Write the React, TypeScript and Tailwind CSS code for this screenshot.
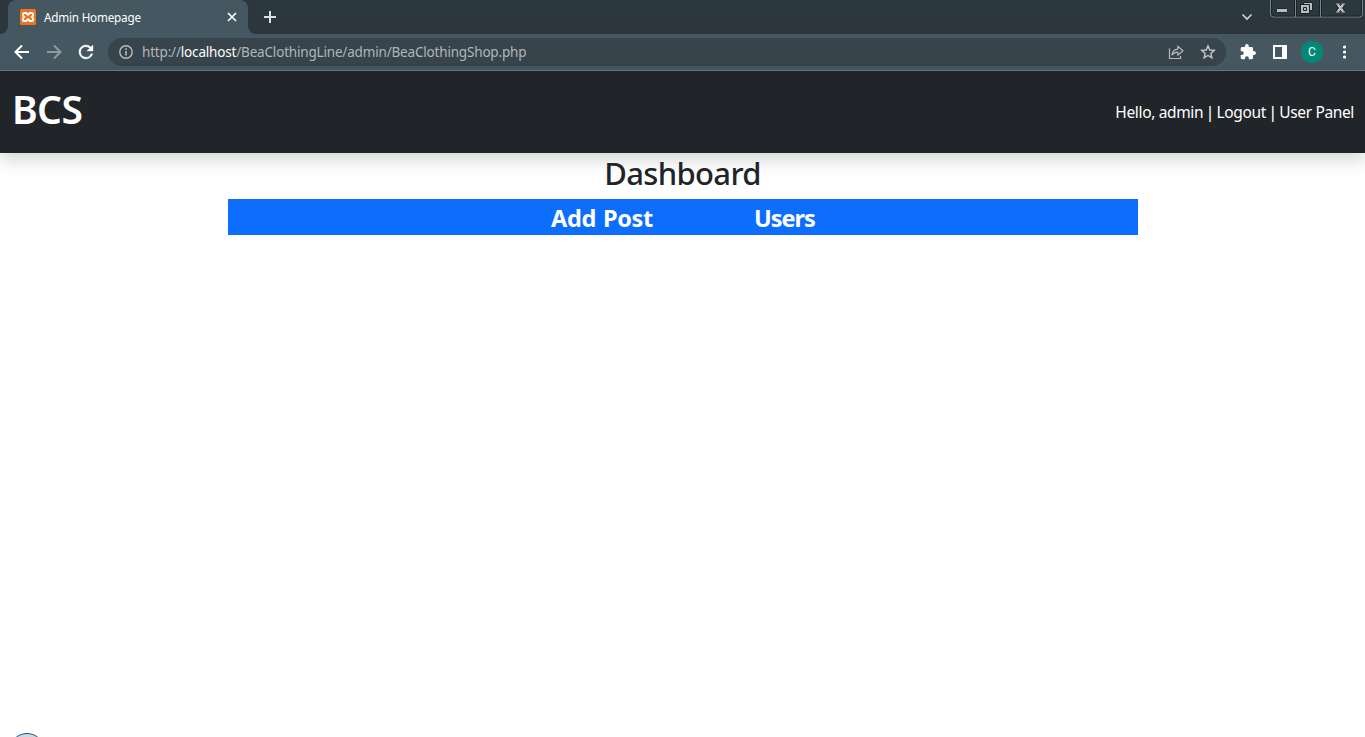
import React from "react";

function XamppIcon() {
  return (
    <svg width="16" height="16" viewBox="0 0 16 16" className="ml-3 shrink-0">
      <rect width="16" height="16" rx="1.5" fill="#ed7423" />
      <path
        d="M4.600 3.900h1.500L8 5.700l1.900-1.800h1.500c1.100 0 1.600.6 1.600 1.600v.8c0 .7-.5 1.200-1.300 1.700.8.5 1.300 1 1.300 1.700v.8c0 1-.5 1.600-1.600 1.600H9.900L8 10.300l-1.900 1.800H4.600C3.500 12.100 3 11.500 3 10.500v-.8c0-.7.5-1.200 1.300-1.700C3.500 7.500 3 7 3 6.300v-.8c0-1 .5-1.600 1.600-1.600Z"
        fill="none"
        stroke="#fff"
        strokeWidth="2"
        strokeLinejoin="round"
      />
    </svg>
  );
}

function TabStrip() {
  return (
    <div className="flex h-[34px] items-start bg-gradient-to-b from-[#2c393f] to-[#2b363c]">
      <div className="flex h-[34px] w-2 items-end bg-[#455761]">
        <div className="h-[34px] w-2 rounded-br-lg bg-[#2b373d]" />
      </div>
      <div className="flex h-[34px] w-60 items-center bg-[#2b373d]">
        <div className="flex h-[34px] w-60 items-center rounded-t-lg bg-[#455761]">
          <XamppIcon />
          <span className="ml-2 w-[183px] whitespace-nowrap text-[11.7px] leading-4 tracking-[-0.2px] text-white">Admin Homepage</span>
          <svg width="10" height="10" viewBox="0 0 10 10" className="shrink-0" stroke="#fff" strokeWidth="1.700">
            <path d="M1 1l8 8M9 1l-8 8" />
          </svg>
        </div>
      </div>
      <div className="h-[34px] w-2 bg-[#455761]">
        <div className="h-[34px] w-2 rounded-bl-lg bg-[#2b373d]" />
      </div>
      <svg width="12" height="12" viewBox="0 0 12 12" className="ml-2 mt-[11px]" stroke="#dce0e2" strokeWidth="2">
        <path d="M6 0v12M0 6h12" />
      </svg>
      <svg width="12" height="8" viewBox="0 0 12 8" className="ml-auto mt-[13px]" fill="none" stroke="#cdd1d3" strokeWidth="1.700">
        <path d="M1.500 1.500L6 6l4.500-4.500" />
      </svg>
      <svg width="95" height="18" viewBox="0 0 95 18" className="ml-[17px]" fill="none">
        <path d="M.5 0v14q0 3 3 3h86q3 0 3-3V0M25.500 0v17M50.500 0v17" stroke="#77838a" />
        <path d="M1.500 0v13q0 3 3 3h20V0M26.500 0v16h23V0M51.500 0v16h37q3 0 3-3V0" stroke="#1b2429" />
        <rect x="6.500" y="8.500" width="11" height="4" rx="1" fill="#b8bcbe" stroke="#1c2326" />
        <path d="M33.500 2.500h9v8h-9z" fill="#b8bcbe" stroke="#1c2326" />
        <path d="M30.500 4.500h9v9h-9z" fill="#b8bcbe" stroke="#1c2326" />
        <path d="M33.500 7.500h3v3h-3z" stroke="#1c2326" />
        <path d="M67.500 4.500l6 7M73.500 4.500l-6 7" stroke="#1c2326" strokeWidth="4" />
        <path d="M66 4h3.500M71.500 4H75M66 12h3.500M71.500 12H75" stroke="#b8bcbe" />
        <path d="M67.800 4.500l5.400 7M73.200 4.500l-5.400 7" stroke="#c3c6c8" strokeWidth="2.200" />
      </svg>
    </div>
  );
}

function Toolbar() {
  return (
    <div className="flex h-[37px] items-center border-b border-[#67777f] bg-[#455761]">
      <svg width="16" height="16" viewBox="0 0 16 16" className="ml-[14px]" fill="none" stroke="#fff" strokeWidth="2">
        <path d="M15 8H2M8 1.500L1.500 8 8 14.500" />
      </svg>
      <svg width="16" height="16" viewBox="0 0 16 16" className="ml-4" fill="none" stroke="#91999d" strokeWidth="2">
        <path d="M1 8h13M8 1.500L14.500 8 8 14.500" />
      </svg>
      <svg width="24" height="24" viewBox="0 0 24 24" className="-mr-1 ml-3 shrink-0" fill="#fff">
        <g transform="translate(1.400 1.400) scale(.88)">
          <path d="M17.650 6.350A7.958 7.958 0 0 0 12 4a8 8 0 1 0 7.730 10h-2.080A6 6 0 1 1 12 6c1.660 0 3.140.69 4.220 1.780L13 11h7V4z" stroke="#fff" strokeWidth=".4" />
        </g>
      </svg>
      <div className="ml-[14px] flex h-7 w-[1118px] items-center rounded-full bg-[#37444b]">
        <svg width="14" height="14" viewBox="0 0 14 14" className="ml-[11px]" fill="none" stroke="#b9bfc2" strokeWidth="1.400">
          <circle cx="7" cy="7" r="6.200" />
          <path d="M7 6v4.500M7 3.300v1.600" strokeWidth="1.500" />
        </svg>
        <span className="ml-[9px] whitespace-nowrap text-[13.5px] leading-5 tracking-[-0.18px] text-[#b0b6ba]">
          http://<span className="text-white">localhost</span>/BeaClothingLine/admin/BeaClothingShop.php
        </span>
        <svg width="16" height="16" viewBox="0 0 16 16" className="ml-auto" fill="none" stroke="#b3b9bc" strokeWidth="1.200">
          <path d="M1.500 4.500v10h11v-2.500" />
          <path d="M9.800 2.200v3C6 5.600 4.300 8 4 11c1.500-2 3.200-2.800 5.800-2.800v3L15 6.700z" strokeLinejoin="round" />
        </svg>
        <svg width="16" height="16" viewBox="0 0 16 16" className="ml-4 mr-[10px]" fill="none" stroke="#c3c8ca" strokeWidth="1.400">
          <path d="M8 1.800l1.750 4.200 4.550.4-3.450 3 1.050 4.400L8 11.500l-3.900 2.300 1.050-4.400-3.450-3L6.250 6z" />
        </svg>
      </div>
      <svg width="16" height="16" viewBox="1 1 22 22" className="ml-[14px]" fill="#fff">
        <path d="M20.500 11H19V7c0-1.100-.9-2-2-2h-4V3.500a2.500 2.500 0 0 0-5 0V5H4c-1.100 0-2 .9-2 2v3.800h1.500a2.700 2.700 0 0 1 0 5.400H2V20c0 1.100.9 2 2 2h3.800v-1.500a2.700 2.700 0 0 1 5.400 0V22H17c1.100 0 2-.9 2-2v-4h1.500a2.500 2.500 0 0 0 0-5z" />
      </svg>
      <svg width="14" height="14" viewBox="0 0 14 14" className="ml-[17px]">
        <path d="M0 0h14v14H0zM2 2v10h7V2z" fill="#fff" fillRule="evenodd" />
      </svg>
      <div className="ml-[14px] flex size-[22px] items-center justify-center rounded-full bg-[#018878] font-[Roboto,sans-serif] text-[12px] text-white">C</div>
      <svg width="4" height="14" viewBox="0 0 4 14" className="ml-[19px]" fill="#fff">
        <circle cx="2.500" cy="2" r="1.600" />
        <circle cx="2.500" cy="7" r="1.600" />
        <circle cx="2.500" cy="12" r="1.600" />
      </svg>
    </div>
  );
}

export default function App() {
  return (
    <div className="flex h-[737px] w-[1365px] flex-col overflow-hidden bg-white font-['Noto_Sans',sans-serif] text-[#212529]">
      <TabStrip />
      <Toolbar />
      <header className="flex h-[82px] shrink-0 items-center justify-between bg-[#212529] pl-3 pr-[11px] text-white shadow-[0_8px_16px_rgba(0,0,0,0.15)]">
        <h1 className="mb-1.5 whitespace-nowrap text-[39px] font-semibold leading-[48px] tracking-[-0.6px]">BCS</h1>
        <p className="whitespace-nowrap text-[15.5px] leading-6 tracking-[-0.36px]">
          Hello, admin<span className="mx-[-1.1px] font-medium"> | </span>Logout<span className="mx-[-1.1px] font-medium"> | </span>User Panel
        </p>
      </header>
      <main className="mx-auto flex w-[910px] flex-col">
        <h2 className="mt-px h-[45px] text-center text-[31px] font-medium leading-[38px] tracking-[-0.65px]">Dashboard</h2>
        <nav className="flex h-9 items-center justify-center gap-[101px] bg-[#0d6efd] pl-px pt-0.5 text-[23.5px] font-bold leading-9 text-white">
          <span className="tracking-[-0.3px] [word-spacing:1px]">Add Post</span>
          <span className="tracking-[-1px]">Users</span>
        </nav>
      </main>
      <div className="ml-2 mt-auto h-1 w-9 overflow-hidden">
        <svg width="36" height="36" viewBox="0 0 36 36">
          <circle cx="19" cy="18" r="17.500" fill="#cbd9e5" stroke="#1d5286" />
        </svg>
      </div>
    </div>
  );
}
